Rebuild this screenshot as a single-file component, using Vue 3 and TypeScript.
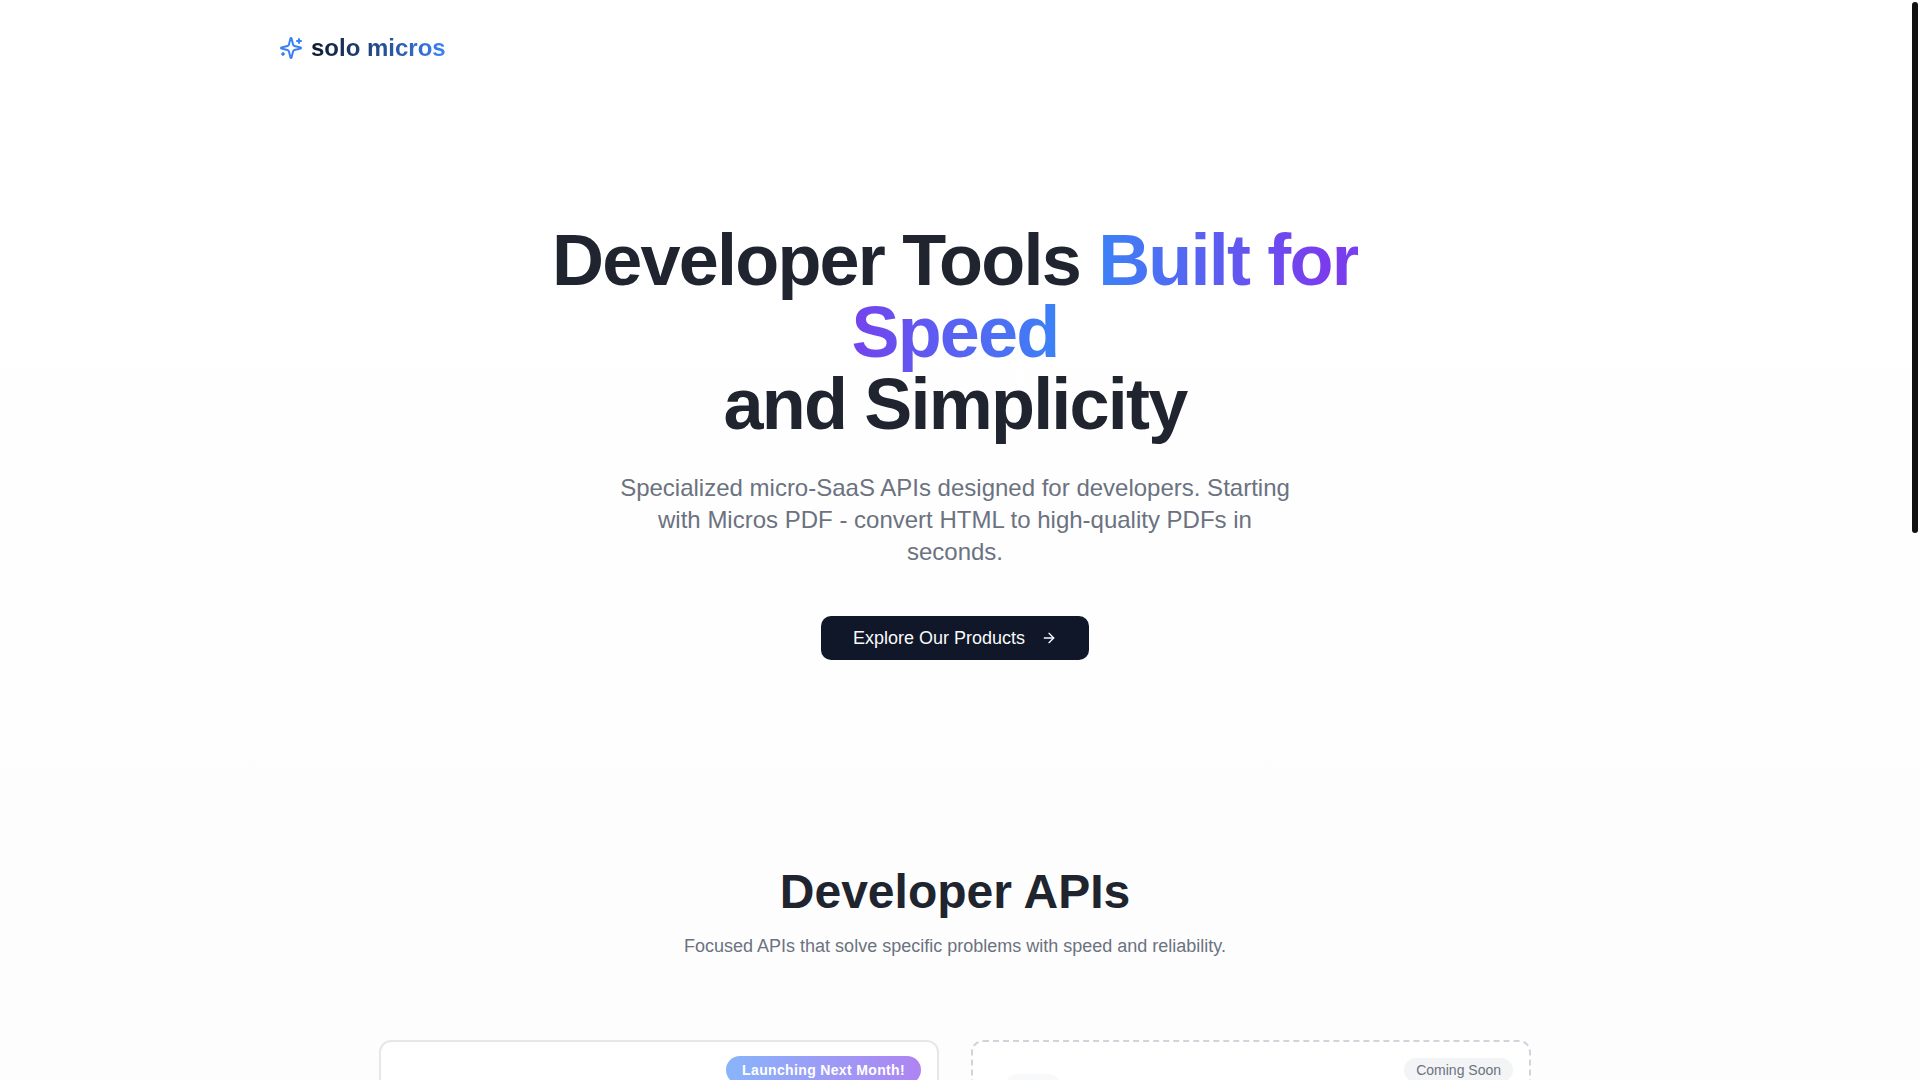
<script setup lang="ts">
interface Product {
  id: string
  badge: string
  upcoming: boolean
}

const products: Product[] = [
  { id: 'pdf', badge: 'Launching Next Month!', upcoming: false },
  { id: 'next', badge: 'Coming Soon', upcoming: true },
]
</script>

<template>
  <div class="page">
    <header class="header">
      <a class="brand" href="#">
        <svg class="brand-icon" viewBox="0 0 24 24" aria-hidden="true">
          <path d="M9.937 15.5A2 2 0 0 0 8.5 14.063l-6.135-1.582a.5.5 0 0 1 0-.962L8.5 9.936A2 2 0 0 0 9.937 8.5l1.582-6.135a.5.5 0 0 1 .963 0L14.063 8.5A2 2 0 0 0 15.5 9.937l6.135 1.581a.5.5 0 0 1 0 .964L15.5 14.063a2 2 0 0 0-1.437 1.437l-1.582 6.135a.5.5 0 0 1-.963 0z" />
          <path d="M20 3v4" />
          <path d="M22 5h-4" />
          <path d="M4 17v2" />
          <path d="M5 18H3" />
        </svg>
        <span class="brand-name">solo micros</span>
      </a>
    </header>

    <main>
      <section class="hero">
        <h1>Developer Tools <span class="accent">Built for Speed</span><br />and Simplicity</h1>
        <p class="lead">
          Specialized micro-SaaS APIs designed for developers. Starting with Micros PDF - convert
          HTML to high-quality PDFs in seconds.
        </p>
        <button class="cta" type="button">
          Explore Our Products
          <svg class="cta-icon" viewBox="0 0 24 24" aria-hidden="true">
            <path d="M5 12h14" />
            <path d="m12 5 7 7-7 7" />
          </svg>
        </button>
      </section>

      <section id="products" class="products">
        <h2>Developer APIs</h2>
        <p class="sub">Focused APIs that solve specific problems with speed and reliability.</p>
        <div class="grid">
          <article
            v-for="product in products"
            :key="product.id"
            class="card"
            :class="{ upcoming: product.upcoming }"
          >
            <span class="badge">{{ product.badge }}</span>
            <div v-if="product.upcoming" class="tile"></div>
          </article>
        </div>
      </section>
    </main>

    <div class="scroll-thumb" aria-hidden="true"></div>
  </div>
</template>

<style>
body {
  margin: 0;
}
</style>

<style scoped>
.page {
  box-sizing: border-box;
  height: 100vh;
  overflow: hidden;
  padding-right: 10px;
  background: linear-gradient(to bottom, #ffffff, #fdfdfd);
  color: #20242f;
  font-family: Arial, "Liberation Sans", sans-serif;
  text-rendering: optimizeLegibility;
}

.header {
  box-sizing: border-box;
  max-width: 1400px;
  margin: 0 auto;
  padding: 32px 24px;
}

.brand {
  display: inline-flex;
  align-items: center;
  gap: 8px;
  height: 32px;
  vertical-align: top;
  text-decoration: none;
}

svg {
  fill: none;
  stroke: currentColor;
  stroke-width: 2;
  stroke-linecap: round;
  stroke-linejoin: round;
}

.brand-icon {
  width: 24px;
  height: 24px;
  color: #3b82f6;
}

.brand-name {
  background: linear-gradient(to right, #0f172a, #3b82f6);
  background-clip: text;
  color: transparent;
  font-size: 24px;
  font-weight: 700;
  line-height: 32px;
}

.hero {
  display: flex;
  flex-direction: column;
  align-items: center;
  padding: 128px 24px;
  text-align: center;
}

h1 {
  max-width: 896px;
  margin: 0;
  font-size: 72px;
  font-weight: 700;
  letter-spacing: -0.025em;
  line-height: 72px;
}

.accent {
  background: linear-gradient(to right, #3b82f6, #7c3aed, #3b82f6);
  background-clip: text;
  color: transparent;
}

.lead {
  max-width: 672px;
  margin: 32px 0 48px;
  color: #6b7280;
  font-size: 24px;
  line-height: 32px;
}

.cta {
  display: inline-flex;
  align-items: center;
  gap: 16px;
  height: 44px;
  padding: 0 32px;
  border: 0;
  border-radius: 10px;
  background: #101728;
  color: #f8fafc;
  font-family: inherit;
  font-size: 18px;
  line-height: 28px;
}

.cta-icon {
  width: 16px;
  height: 16px;
}

.products {
  padding: 80px 24px;
  text-align: center;
}

h2 {
  margin: 0;
  font-size: 48px;
  font-weight: 700;
  line-height: 48px;
}

.sub {
  margin: 16px 0 80px;
  color: #6b7280;
  font-size: 18px;
  line-height: 28px;
}

.grid {
  display: grid;
  grid-template-columns: repeat(2, minmax(0, 1fr));
  gap: 32px;
  max-width: 1152px;
  margin: 0 auto;
}

.card {
  position: relative;
  box-sizing: border-box;
  min-height: 400px;
  padding: 32px;
  border: 2px solid #e5e7eb;
  border-radius: 12px;
  background: #ffffff;
}

.card.upcoming {
  border-color: #d1d5db;
  border-style: dashed;
}

.badge {
  position: absolute;
  top: 14px;
  right: 16px;
  padding: 4px 16px;
  border-radius: 999px;
  background: linear-gradient(to right, #89b4fa, #ae84f2);
  color: #ffffff;
  font-size: 14px;
  font-weight: 700;
  letter-spacing: 0.025em;
  line-height: 20px;
}

.upcoming .badge {
  top: 16px;
  padding: 2px 12px;
  background: #f3f4f6;
  color: #6b7280;
  font-weight: 400;
  letter-spacing: normal;
}

.tile {
  width: 56px;
  height: 56px;
  border-radius: 12px;
  background: #f8f9fa;
}

.scroll-thumb {
  position: fixed;
  top: 2px;
  right: 2px;
  width: 6px;
  height: calc(50vh - 9px);
  border-radius: 3px;
  background: #111111;
}
</style>
